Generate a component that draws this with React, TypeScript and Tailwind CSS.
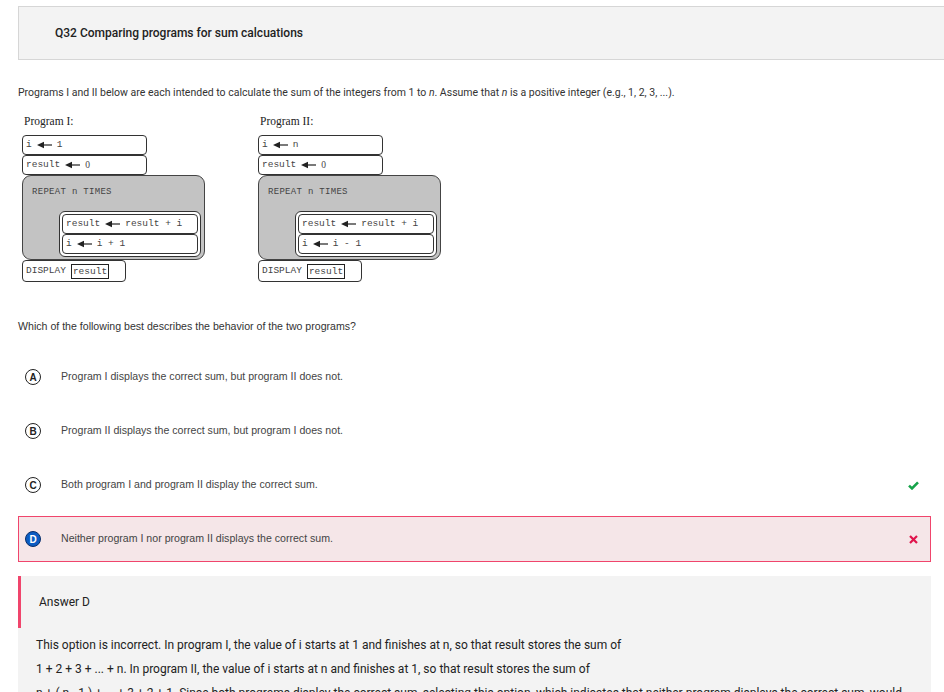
import React from 'react';

const Arrow = () => (
  <svg className="inline-block mx-[5px] align-middle" width="15" height="8" viewBox="0 0 15 8">
    <path d="M0 4 L7 0.8 L7 7.2 Z" fill="#222" />
    <line x1="6" y1="4" x2="15" y2="4" stroke="#222" strokeWidth="1.2" />
  </svg>
);

// plain zero (the mono font draws a dotted one)
const Zero = () => <span style={{ fontFamily: '"Liberation Serif", serif' }}>0</span>;

const Line = ({ children, w }: { children: React.ReactNode; w: string }) => (
  <div className={`${w} h-[20px] border border-[#333] rounded-[4px] bg-white flex items-center pl-[3px] text-[#444] whitespace-nowrap`}>
    {children}
  </div>
);

function Program({ label, init, step }: { label: string; init: string; step: React.ReactNode }) {
  return (
    <div className="w-[236px] shrink-0">
      <div className="pl-[2px] text-[11.5px] leading-[14px] text-[#222] mb-[7px]" style={{ fontFamily: '"Liberation Serif", serif' }}>
        {label}
      </div>
      <div className="flex flex-col" style={{ fontFamily: '"Liberation Mono", monospace' }}>
        <div className="text-[9.5px]">
          <Line w="w-[125px]">
            i<Arrow />{init}
          </Line>
          <Line w="w-[125px]">
            result<Arrow /><Zero />
          </Line>
        </div>
        <div className="w-[183px] h-[85px] bg-[#c3c3c3] border border-[#444] rounded-[9px] pt-[10px] pl-[9px] pr-[3px] text-[9px] text-[#444]">
          <div className="leading-[12px] tracking-[0.3px]">REPEAT n TIMES</div>
          <div className="ml-[27px] mt-[13px] bg-white border border-[#333] rounded-[6px] p-[2px] flex flex-col text-[9.5px]">
            <Line w="w-full">
              result<Arrow />result + i
            </Line>
            <Line w="w-full">{step}</Line>
          </div>
        </div>
        <div className="w-[104px] h-[22px] border border-[#333] rounded-[4px] bg-white flex items-center pl-[3px] text-[9.5px] text-[#444]">
          DISPLAY
          <span className="ml-[5px] border border-[#222] px-[1px] leading-[13px]">result</span>
        </div>
      </div>
    </div>
  );
}

const options = [
  { letter: 'A', text: 'Program I displays the correct sum, but program II does not.', mark: null as null | 'ok' | 'bad', selected: false },
  { letter: 'B', text: 'Program II displays the correct sum, but program I does not.', mark: null, selected: false },
  { letter: 'C', text: 'Both program I and program II display the correct sum.', mark: 'ok', selected: false },
  { letter: 'D', text: 'Neither program I nor program II displays the correct sum.', mark: 'bad', selected: true },
];

export default function App() {
  return (
    <div className="w-[944px] h-[692px] overflow-hidden bg-white text-[#333]" style={{ fontFamily: 'Roboto, sans-serif' }}>
      {/* Title bar */}
      <div className="mt-[6px] ml-[18px] w-[940px] h-[54px] bg-[#f3f3f3] border border-[#d6d6d6] flex items-center pl-[36px]">
        <h1 className="text-[12px] font-medium text-[#222]">Q32 Comparing programs for sum calcuations</h1>
      </div>

      <div className="px-[18px]">
        <p className="mt-[26px] text-[10.5px] leading-[14px] text-[#333]">
          Programs I and II below are each intended to calculate the sum of the integers from 1 to <i>n</i>. Assume that <i>n</i> is a positive integer (e.g., 1, 2, 3, ...).
        </p>

        <div className="mt-[14px] pl-[4px] flex">
          <Program label="Program I:" init="1" step={<>i<Arrow />i + 1</>} />
          <Program label="Program II:" init="n" step={<>i<Arrow />i - 1</>} />
        </div>

        <div style={{ fontFamily: '"Liberation Sans", Arial, sans-serif' }}>
          <p className="mt-[37px] text-[10.6px] leading-[14px] text-[#333]">
            Which of the following best describes the behavior of the two programs?
          </p>

          <div className="mt-[21px] w-[913px] flex flex-col gap-[8px]">
            {options.map((o) => (
              <div
                key={o.letter}
                className={`h-[46px] flex items-center pl-[6px] pr-[11px] border ${o.selected ? 'border-[#f0456c] bg-[#f5e6e8]' : 'border-transparent'}`}
              >
                <span
                  className={`w-[16px] h-[16px] rounded-full flex items-center justify-center text-[10px] font-bold ${
                    o.selected ? 'bg-[#0b5cc2] border border-[#0a2f6a] text-white' : 'border-[1.3px] border-[#222] text-[#222]'
                  }`}
                >
                  {o.letter}
                </span>
                <span className="ml-[20px] text-[10.6px] text-[#444]">{o.text}</span>
                <span className="ml-auto w-[11px] flex justify-center">
                  {o.mark === 'ok' && (
                    <svg width="11" height="9" viewBox="0 0 11 9">
                      <path d="M1 4.6 L4 7.4 L10 1.3" fill="none" stroke="#16a34a" strokeWidth="2.6" />
                    </svg>
                  )}
                  {o.mark === 'bad' && (
                    <svg width="9" height="9" viewBox="0 0 9 9">
                      <path d="M1 1 L8 8 M8 1 L1 8" fill="none" stroke="#e0144c" strokeWidth="2.2" />
                    </svg>
                  )}
                </span>
              </div>
            ))}
          </div>
        </div>

        {/* Answer */}
        <div className="mt-[14px] w-[913px] bg-[#f3f3f3] pb-[10px]">
          <div className="h-[52px] border-l-[3px] border-[#f0456c] flex items-center pl-[18px] text-[12px] text-[#222]">
            Answer D
          </div>
          <div className="pt-[5px] pl-[18px] pr-[18px] text-[12px] leading-[24px] text-[#222]">
            <p>This option is incorrect. In program I, the value of i starts at 1 and finishes at n, so that result stores the sum of</p>
            <p>1 + 2 + 3 + ... + n. In program II, the value of i starts at n and finishes at 1, so that result stores the sum of</p>
            <p className="whitespace-nowrap">n + ( n - 1 ) + ... + 3 + 2 + 1. Since both programs display the correct sum, selecting this option, which indicates that neither program displays the correct sum, would</p>
          </div>
        </div>
      </div>
    </div>
  );
}
